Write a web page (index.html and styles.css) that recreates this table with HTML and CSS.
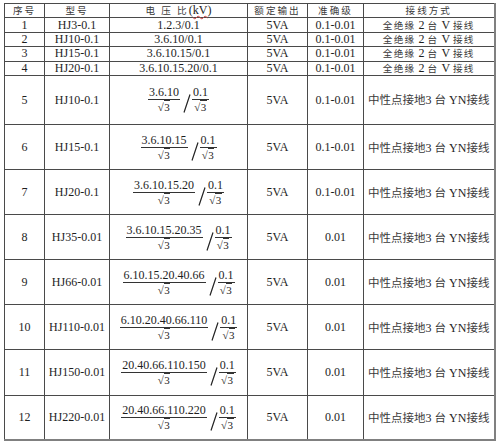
FILE: index.html
```html
<!DOCTYPE html>
<html lang="zh">
<head>
<meta charset="utf-8">
<link rel="stylesheet" href="styles.css">
</head>
<body>
<table class="spec">
  <colgroup>
    <col class="c1"><col class="c2"><col class="c3"><col class="c4"><col class="c5"><col class="c6">
  </colgroup>
  <tr class="short head">
    <td class="cjk">序号</td>
    <td class="cjk">型号</td>
    <td><span class="cjk">电&nbsp;压&nbsp;比</span>(<span class="squig">kV</span>)</td>
    <td class="cjk">额定输出</td>
    <td class="cjk">准确级</td>
    <td class="cjk">接线方式</td>
  </tr>
  <tr class="short">
    <td>1</td><td>HJ3-0.1</td><td>1.2.3/0.1</td><td>5VA</td><td>0.1-0.01</td>
    <td><span class="cjk">全绝缘</span> 2 <span class="cjk">台</span> V <span class="cjk">接线</span></td>
  </tr>
  <tr class="short">
    <td>2</td><td>HJ10-0.1</td><td>3.6.10/0.1</td><td>5VA</td><td>0.1-0.01</td>
    <td><span class="cjk">全绝缘</span> 2 <span class="cjk">台</span> V <span class="cjk">接线</span></td>
  </tr>
  <tr class="short">
    <td>3</td><td>HJ15-0.1</td><td>3.6.10.15/0.1</td><td>5VA</td><td>0.1-0.01</td>
    <td><span class="cjk">全绝缘</span> 2 <span class="cjk">台</span> V <span class="cjk">接线</span></td>
  </tr>
  <tr class="short">
    <td>4</td><td>HJ20-0.1</td><td>3.6.10.15.20/0.1</td><td>5VA</td><td>0.1-0.01</td>
    <td><span class="cjk">全绝缘</span> 2 <span class="cjk">台</span> V <span class="cjk">接线</span></td>
  </tr>

  <tr class="tall first">
    <td>5</td><td>HJ10-0.1</td>
    <td><span class="ratio"><span class="frac"><span class="num">3.6.10</span><span class="den">√<span class="ov">3</span></span></span><svg class="slash" viewBox="0 0 8 19"><line x1="7" y1="0.5" x2="1" y2="18.5"/></svg><span class="frac"><span class="num">0.1</span><span class="den">√<span class="ov">3</span></span></span></span></td>
    <td>5VA</td><td>0.1-0.01</td>
    <td><span class="cjk">中性点接地</span>3 <span class="cjk">台</span> YN<span class="cjk">接线</span></td>
  </tr>
  <tr class="tall">
    <td>6</td><td>HJ15-0.1</td>
    <td><span class="ratio"><span class="frac"><span class="num">3.6.10.15</span><span class="den">√<span class="ov">3</span></span></span><svg class="slash" viewBox="0 0 8 19"><line x1="7" y1="0.5" x2="1" y2="18.5"/></svg><span class="frac"><span class="num">0.1</span><span class="den">√<span class="ov">3</span></span></span></span></td>
    <td>5VA</td><td>0.1-0.01</td>
    <td><span class="cjk">中性点接地</span>3 <span class="cjk">台</span> YN<span class="cjk">接线</span></td>
  </tr>
  <tr class="tall">
    <td>7</td><td>HJ20-0.1</td>
    <td><span class="ratio"><span class="frac"><span class="num">3.6.10.15.20</span><span class="den">√<span class="ov">3</span></span></span><svg class="slash" viewBox="0 0 8 19"><line x1="7" y1="0.5" x2="1" y2="18.5"/></svg><span class="frac"><span class="num">0.1</span><span class="den">√<span class="ov">3</span></span></span></span></td>
    <td>5VA</td><td>0.1-0.01</td>
    <td><span class="cjk">中性点接地</span>3 <span class="cjk">台</span> YN<span class="cjk">接线</span></td>
  </tr>
  <tr class="tall">
    <td>8</td><td>HJ35-0.01</td>
    <td><span class="ratio"><span class="frac"><span class="num">3.6.10.15.20.35</span><span class="den">√<span class="ov">3</span></span></span><svg class="slash" viewBox="0 0 8 19"><line x1="7" y1="0.5" x2="1" y2="18.5"/></svg><span class="frac"><span class="num">0.1</span><span class="den">√<span class="ov">3</span></span></span></span></td>
    <td>5VA</td><td>0.01</td>
    <td><span class="cjk">中性点接地</span>3 <span class="cjk">台</span> YN<span class="cjk">接线</span></td>
  </tr>
  <tr class="tall">
    <td>9</td><td>HJ66-0.01</td>
    <td><span class="ratio"><span class="frac"><span class="num">6.10.15.20.40.66</span><span class="den">√<span class="ov">3</span></span></span><svg class="slash" viewBox="0 0 8 19"><line x1="7" y1="0.5" x2="1" y2="18.5"/></svg><span class="frac"><span class="num">0.1</span><span class="den">√<span class="ov">3</span></span></span></span></td>
    <td>5VA</td><td>0.01</td>
    <td><span class="cjk">中性点接地</span>3 <span class="cjk">台</span> YN<span class="cjk">接线</span></td>
  </tr>
  <tr class="tall">
    <td>10</td><td>HJ110-0.01</td>
    <td><span class="ratio"><span class="frac"><span class="num">6.10.20.40.66.110</span><span class="den">√<span class="ov">3</span></span></span><svg class="slash" viewBox="0 0 8 19"><line x1="7" y1="0.5" x2="1" y2="18.5"/></svg><span class="frac"><span class="num">0.1</span><span class="den">√<span class="ov">3</span></span></span></span></td>
    <td>5VA</td><td>0.01</td>
    <td><span class="cjk">中性点接地</span>3 <span class="cjk">台</span> YN<span class="cjk">接线</span></td>
  </tr>
  <tr class="tall">
    <td>11</td><td>HJ150-0.01</td>
    <td><span class="ratio"><span class="frac"><span class="num">20.40.66.110.150</span><span class="den">√<span class="ov">3</span></span></span><svg class="slash" viewBox="0 0 8 19"><line x1="7" y1="0.5" x2="1" y2="18.5"/></svg><span class="frac"><span class="num">0.1</span><span class="den">√<span class="ov">3</span></span></span></span></td>
    <td>5VA</td><td>0.01</td>
    <td><span class="cjk">中性点接地</span>3 <span class="cjk">台</span> YN<span class="cjk">接线</span></td>
  </tr>
  <tr class="tall">
    <td>12</td><td>HJ220-0.01</td>
    <td><span class="ratio"><span class="frac"><span class="num">20.40.66.110.220</span><span class="den">√<span class="ov">3</span></span></span><svg class="slash" viewBox="0 0 8 19"><line x1="7" y1="0.5" x2="1" y2="18.5"/></svg><span class="frac"><span class="num">0.1</span><span class="den">√<span class="ov">3</span></span></span></span></td>
    <td>5VA</td><td>0.01</td>
    <td><span class="cjk">中性点接地</span>3 <span class="cjk">台</span> YN<span class="cjk">接线</span></td>
  </tr>
</table>
</body>
</html>
```

FILE: styles.css
```css
html, body {
  margin: 0;
  padding: 0;
  background: #ffffff;
}

body {
  padding: 3px 0 0 4px;
  font-family: "Liberation Serif", "Noto Sans CJK SC", serif;
  font-size: 12px;
  color: #1e1e1e;
}

.spec {
  border-collapse: collapse;
  table-layout: fixed;
  width: 490px;
}

.c1 { width: 40px; }
.c2 { width: 65px; }
.c3 { width: 138px; }
.c4 { width: 60px; }
.c5 { width: 56px; }
.c6 { width: 131px; }

.spec td {
  border: 1px solid #4a4a4a;
  padding: 0;
  text-align: center;
  vertical-align: middle;
  white-space: nowrap;
  line-height: 12px;
}

.spec td:last-child {
  border-right: 2px solid #808080;
}

.spec tr:last-child td {
  border-bottom: 2px solid #808080;
}

.short {
  height: 14.4px;
}

.short td {
  line-height: 11px;
}

.tall {
  height: 45.1px;
}

.tall.first {
  height: 49px;
}

.cjk {
  font-family: "Noto Sans CJK SC", sans-serif;
  font-size: 11.5px;
  color: #3a3a3a;
}

.short .cjk {
  font-size: 9.6px;
  letter-spacing: 1.3px;
}

.head .cjk {
  font-size: 9.6px;
  letter-spacing: 2px;
}

.squig {
  font-family: "Liberation Serif", serif;
  font-size: 12px;
  text-decoration: underline wavy #d04040;
  text-decoration-thickness: 1px;
  text-underline-offset: 1px;
}

.ratio {
  display: inline-flex;
  align-items: stretch;
  vertical-align: middle;
}

.frac {
  display: inline-flex;
  flex-direction: column;
  align-items: stretch;
  line-height: 12px;
}

.num {
  border-bottom: 1px solid #333;
  padding: 0 1px 1px;
  text-align: center;
}

.den {
  padding-top: 1px;
  text-align: center;
  font-size: 11px;
}

.ov {
  border-top: 1px solid #333;
  padding: 0 0.5px;
}

.slash {
  align-self: flex-end;
  width: 8px;
  height: 19px;
  margin: 0 1px 0 3px;
}

.slash line {
  stroke: #222;
  stroke-width: 1.2;
}
```
